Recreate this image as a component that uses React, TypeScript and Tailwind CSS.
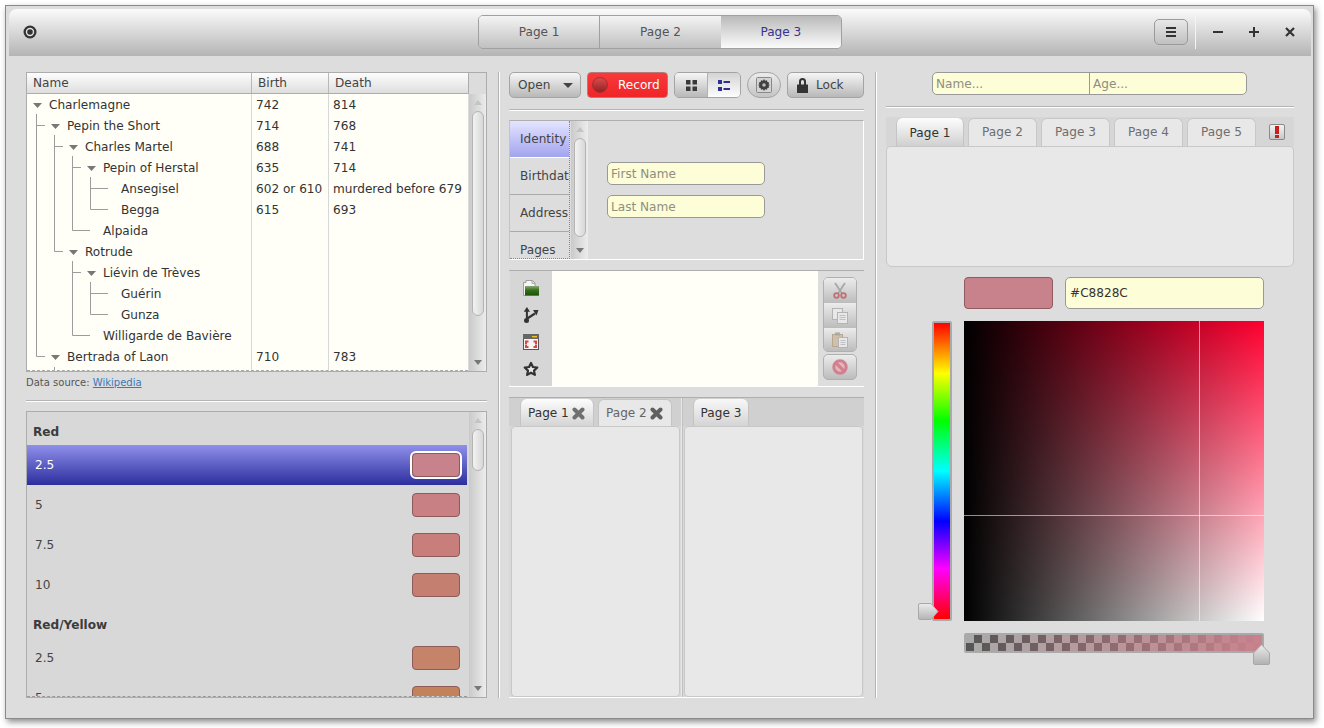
import React from "react";

const tri = (cls = "") => (
  <svg width="9" height="5" viewBox="0 0 9 5" className={cls}>
    <polygon points="0,0 9,0 4.5,5" fill="#777" />
  </svg>
);

function ScrollBar({ thumb, className = "" }: { thumb: string; className?: string }) {
  return (
    <div className={`w-[17px] shrink-0 flex flex-col items-center bg-[linear-gradient(to_right,#cacaca,#ececec)] ${className}`}>
      <div className="h-[17px] shrink-0 flex items-center justify-center">
        <svg width="8" height="5" viewBox="0 0 8 5"><polygon points="0,5 8,5 4,0" fill="#c4c4c4" /></svg>
      </div>
      <div className={`w-[12px] rounded-[6px] border border-[#b4b4b4] bg-[linear-gradient(to_right,#f2f2f2,#d8d8d8)] shrink-0 ${thumb}`} />
      <div className="flex-1 flex items-end justify-center pb-[6px]">
        <svg width="8" height="5" viewBox="0 0 8 5"><polygon points="0,0 8,0 4,5" fill="#777" /></svg>
      </div>
    </div>
  );
}

const treeRows: [string, number, boolean, string, string][] = [
  ["Charlemagne", 0, true, "742", "814"],
  ["Pepin the Short", 1, true, "714", "768"],
  ["Charles Martel", 2, true, "688", "741"],
  ["Pepin of Herstal", 3, true, "635", "714"],
  ["Ansegisel", 4, false, "602 or 610", "murdered before 679"],
  ["Begga", 4, false, "615", "693"],
  ["Alpaida", 3, false, "", ""],
  ["Rotrude", 2, true, "", ""],
  ["Liévin de Trèves", 3, true, "", ""],
  ["Guérin", 4, false, "", ""],
  ["Gunza", 4, false, "", ""],
  ["Willigarde de Bavière", 3, false, "", ""],
  ["Bertrada of Laon", 1, true, "710", "783"],
];

function TreeLines() {
  const d = [
    "M9.5 20V262.5H18", "M9.5 31.5H18",
    "M27.5 41V157.5H36", "M27.5 52.5H36",
    "M45.5 62V136.5H63", "M45.5 73.5H54",
    "M63.5 83V115.5H81", "M63.5 94.5H81",
    "M45.5 167V241.5H63", "M45.5 178.5H54",
    "M63.5 188V220.5H81", "M63.5 199.5H81",
    "M27.5 273V280",
  ].join(" ");
  return (
    <svg className="absolute left-0 top-0 pointer-events-none" width="120" height="280" viewBox="0 0 120 280">
      <path d={d} fill="none" stroke="#9c9c9c" strokeWidth="1" />
    </svg>
  );
}

function TreePanel() {
  return (
    <div className="h-[300px] border border-[#acacac] flex flex-col bg-[#dcdcdc] shrink-0">
      <div className="flex h-[21px] shrink-0">
        <div className="flex w-[442px] border-b border-r border-[#acacac] bg-[linear-gradient(to_bottom,#fdfdfd,#dedede)] text-[#444]">
          <div className="w-[225px] pl-[6px] border-r border-[#b8b8b8] leading-[20px]">Name</div>
          <div className="w-[77px] pl-[6px] border-r border-[#b8b8b8] leading-[20px]">Birth</div>
          <div className="flex-1 pl-[6px] leading-[20px]">Death</div>
        </div>
      </div>
      <div className="flex flex-1 min-h-0">
        <div className="w-[442px] relative overflow-hidden bg-[#fffff8] border-b border-dashed border-[#aaa] text-[#333] pt-[1px]">
          <TreeLines />
          <div className="absolute left-[224px] top-0 bottom-0 w-px bg-[#d8d8d8]" />
          <div className="absolute left-[301px] top-0 bottom-0 w-px bg-[#d8d8d8]" />
          {treeRows.map(([n, l, open, b, de]) => (
            <div key={n} className="flex h-[21px] items-center relative">
              <div className="w-[225px] flex items-center">
                <div className={l === 0 ? "w-[22px] shrink-0" : l === 1 ? "w-[40px] shrink-0" : l === 2 ? "w-[58px] shrink-0" : l === 3 ? "w-[76px] shrink-0" : "w-[94px] shrink-0"}>
                  {open && tri(l === 0 ? "ml-[6px]" : l === 1 ? "ml-[24px]" : l === 2 ? "ml-[42px]" : "ml-[60px]")}
                </div>
                <span className="whitespace-nowrap">{n}</span>
              </div>
              <div className="w-[77px] pl-[4px] whitespace-nowrap">{b}</div>
              <div className="flex-1 pl-[4px] whitespace-nowrap">{de}</div>
            </div>
          ))}
        </div>
        <ScrollBar thumb="h-[205px]" className="ml-[1px]" />
      </div>
    </div>
  );
}

function ListPanel() {
  const Sw = ({ c, sel }: { c: string; sel?: boolean }) => (
    <div className={`w-[48px] h-[24px] rounded-[4px] border border-[#8f5a5a] ${c} ${sel ? "outline-2 outline-white" : ""}`} />
  );
  const Row = ({ t, c, sel }: { t: string; c: string; sel?: boolean }) => (
    <div className={`h-[40px] shrink-0 flex items-center justify-between pl-[8px] pr-[7px] ${sel ? "bg-[linear-gradient(to_bottom,#8f90ea,#2c2e9e)] text-white" : "text-[#444]"}`}>
      <span>{t}</span>
      <Sw c={c} sel={sel} />
    </div>
  );
  const Head = ({ t }: { t: string }) => (
    <div className="h-[33px] shrink-0 flex items-center pl-[6px] font-bold text-[#3c3c3c] pt-[7px]">{t}</div>
  );
  return (
    <div className="flex-1 min-h-0 border border-[#acacac] flex bg-[#d8d8d8]">
      <div className="w-[441px] overflow-hidden flex flex-col border-b border-dashed border-[#999] h-[285px]">
        <Head t="Red" />
        <Row t="2.5" c="bg-[#c8828c]" sel />
        <Row t="5" c="bg-[#c88084]" />
        <Row t="7.5" c="bg-[#c87f7c]" />
        <Row t="10" c="bg-[#c47f70]" />
        <Head t="Red/Yellow" />
        <Row t="2.5" c="bg-[#c5836a]" />
        <Row t="5" c="bg-[#c3825a]" />
      </div>
      <div className="w-[2px]" />
      <ScrollBar thumb="h-[42px]" />
    </div>
  );
}

const btn = "h-[26px] rounded-[5px] border border-[#a4a4a4] bg-[linear-gradient(to_bottom,#f6f6f6,#b8b8b8)] flex items-center text-[#444]";

function Toolbar() {
  return (
    <div className="flex gap-[6px] h-[26px] shrink-0">
      <div className={`${btn} w-[72px] pl-[8px] justify-between pr-[7px]`}>
        <span>Open</span>
        <svg width="10" height="5" viewBox="0 0 10 5"><polygon points="0,0 10,0 5,5" fill="#444" /></svg>
      </div>
      <div className="h-[26px] w-[81px] rounded-[4px] border border-[#b87878] bg-[linear-gradient(to_bottom,#f83a3a,#f02428)] flex items-center pl-[4px] text-white">
        <div className="w-[16px] h-[16px] rounded-full bg-[linear-gradient(to_bottom,#d84c4c,#962020)] border border-[#a03030]" />
        <span className="ml-[10px]">Record</span>
      </div>
      <div className="flex h-[26px] w-[67px] rounded-[5px] border border-[#a4a4a4] overflow-hidden">
        <div className="w-[33px] bg-[linear-gradient(to_bottom,#f6f6f6,#b8b8b8)] flex items-center justify-center border-r border-[#b0b0b0]">
          <svg width="11" height="11" viewBox="0 0 11 11" fill="#3a3a3a"><rect width="4.5" height="4.5" /><rect x="6.5" width="4.5" height="4.5" /><rect y="6.5" width="4.5" height="4.5" /><rect x="6.5" y="6.5" width="4.5" height="4.5" /></svg>
        </div>
        <div className="flex-1 bg-[linear-gradient(to_bottom,#d4d4d4,#fdfdfd)] flex items-center justify-center">
          <svg width="12" height="11" viewBox="0 0 12 11" fill="#2d2f92"><rect width="4" height="4" /><rect x="5.5" y="1" width="6.5" height="2" /><rect y="7" width="4" height="4" /><rect x="5.5" y="8" width="6.5" height="2" /></svg>
        </div>
      </div>
      <div className="h-[26px] w-[34px] rounded-[13px] border border-[#a4a4a4] bg-[linear-gradient(to_bottom,#ececec,#c4c4c4)] flex items-center justify-center">
        <svg width="16" height="16" viewBox="0 0 16 16">
          <rect x="0.5" y="0.5" width="15" height="15" rx="1" fill="#d4d4d4" stroke="#888" />
          <path d="M8 2l1.1 1.8 1.9-.6.4 1.8 1.8.4-.6 1.9L14 8l-1.4.7.6 1.9-1.8.4-.4 1.8-1.9-.6L8 14l-1.1-1.8-1.9.6-.4-1.8-1.8-.4.6-1.9L2 8l1.4-.7-.6-1.9 1.8-.4.4-1.8 1.9.6z" fill="#404040" />
          <circle cx="8" cy="8" r="1.8" fill="#bdbdbd" />
        </svg>
      </div>
      <div className={`${btn} w-[77px] pl-[9px]`}>
        <svg width="11" height="15" viewBox="0 0 11 15"><path d="M3 7V3.5a2.5 2.5 0 0 1 5 0V7" fill="none" stroke="#333" strokeWidth="2" /><rect y="6.5" width="11" height="8.5" rx=".5" fill="#333" /></svg>
        <span className="ml-[8px]">Lock</span>
      </div>
    </div>
  );
}

const field = "rounded-[5px] border border-[#999] bg-[#fdfdd8]";

function SideTabs() {
  return (
    <div className="h-[140px] shrink-0 border-t border-[#aeaeae] border-b border-b-white border-l border-l-[#c4c4c4] border-r border-r-white flex">
      <div className="w-[60px] overflow-hidden flex flex-col text-[#444] border-r border-dotted border-[#888] border-b border-b-[#888] h-[138px]">
        <div className="h-[37px] shrink-0 pl-[10px] flex items-center bg-[linear-gradient(to_bottom,#e4e4ff,#a2a4ee)] border-b border-[#fff]">Identity</div>
        <div className="h-[37px] shrink-0 pl-[10px] flex items-center border-b border-[#aaa] whitespace-nowrap">Birthdate</div>
        <div className="h-[37px] shrink-0 pl-[10px] flex items-center border-b border-[#aaa]">Address</div>
        <div className="h-[37px] shrink-0 pl-[10px] flex items-center">Pages</div>
      </div>
      <div className="w-[1px]" />
      <ScrollBar thumb="h-[99px]" />
      <div className="flex flex-col gap-[10px] pl-[19px] pt-[41px]">
        <div className={`${field} w-[158px] h-[23px] pl-[3px] leading-[22px] text-[#8f8f80]`}>First Name</div>
        <div className={`${field} w-[158px] h-[23px] pl-[3px] leading-[22px] text-[#8f8f80]`}>Last Name</div>
      </div>
    </div>
  );
}

function Rail() {
  return (
    <div className="h-[117px] shrink-0 border-t border-[#aeaeae] border-b border-b-white flex">
      <div className="w-[42px] bg-[#d6d6d6] ml-[1px] flex flex-col items-center pt-[9px] gap-[11px] rounded-bl-[4px]">
        <svg width="16" height="16" viewBox="0 0 16 16">
          <defs><linearGradient id="fo" x1="0" y1="0" x2="0" y2="1"><stop offset="0" stopColor="#8aa878" /><stop offset=".45" stopColor="#356f18" /><stop offset="1" stopColor="#1d5206" /></linearGradient></defs>
          <path d="M.5 15.5V2.5H3V.5h6.5L12 3v3.5h3.5v9z" fill="#f6f6f6" stroke="#959595" strokeWidth=".9" />
          <path d="M9 .8V3.3H11.8" fill="none" stroke="#959595" strokeWidth=".9" />
          <rect x="2" y="6" width="14" height="9.5" fill="url(#fo)" />
        </svg>
        <svg width="16" height="16" viewBox="0 0 16 16" fill="#333">
          <circle cx="3.5" cy="13.5" r="2.5" />
          <rect x="2.9" y="3" width="2" height="10" />
          <polygon points="3.9,0 7,4.8 .8,4.8" />
          <path d="M3.5 12L12 6.5" stroke="#333" strokeWidth="2.2" />
          <polygon points="10,3 15.5,3 13.5,8.5" />
        </svg>
        <svg width="16" height="16" viewBox="0 0 16 16">
          <rect x=".5" y=".5" width="15" height="15" fill="#f8f4f4" stroke="#555" />
          <rect x="0" y="0" width="16" height="5" fill="#666" />
          <rect x="9" y="2" width="5" height="1.4" fill="#e8c030" />
          <path d="M2 6.5h3.5v2H4v1.5H2zM14 6.5h-3.5v2H12v1.5h2zM2 14h3.5v-2H4v-1.5H2zM14 14h-3.5v-2H12v-1.5h2z" fill="#d04848" />
        </svg>
        <svg width="16" height="16" viewBox="0 0 16 16"><polygon points="8,2 9.9,6 14.3,6.5 11,9.6 11.9,13.9 8,11.7 4.1,13.9 5,9.6 1.7,6.5 6.1,6" fill="#e8e8e8" stroke="#333" strokeWidth="2.2" strokeLinejoin="round" /></svg>
      </div>
      <div className="flex-1 bg-[#fffff8]" />
      <div className="w-[46px] flex flex-col items-center pt-[6px] pr-[2px]">
        <div className="w-[34px] rounded-[5px] border border-[#b0b0b0] overflow-hidden flex flex-col h-[75px]">
          <div className="h-[25px] bg-[linear-gradient(to_bottom,#ececec,#bcbcbc)] flex items-center justify-center">
            <svg width="14" height="17" viewBox="0 0 14 17"><path d="M2 1l7 10.5M12 1L5 11.5" stroke="#a8a8a8" strokeWidth="1.8" /><circle cx="3.5" cy="13.5" r="2.3" fill="none" stroke="#c07070" strokeWidth="1.8" /><circle cx="10.5" cy="13.5" r="2.3" fill="none" stroke="#c07070" strokeWidth="1.8" /></svg>
          </div>
          <div className="h-[25px] bg-[linear-gradient(to_bottom,#ececec,#bcbcbc)] flex items-center justify-center">
            <svg width="16" height="16" viewBox="0 0 16 16"><rect x=".5" y=".5" width="10" height="11" fill="#e8e8e8" stroke="#b4b4b4" /><rect x="5.5" y="4.5" width="10" height="11" fill="#e8e8e8" stroke="#b4b4b4" /><path d="M7.5 7.5h6M7.5 9.5h6M7.5 11.5h6" stroke="#c0c0c0" /></svg>
          </div>
          <div className="flex-1 bg-[linear-gradient(to_bottom,#ececec,#bcbcbc)] flex items-center justify-center">
            <svg width="16" height="16" viewBox="0 0 16 16"><rect x=".5" y="2.5" width="10" height="12" fill="#cfc0ac" stroke="#b8a890" /><rect x="3" y="0.5" width="5" height="3" fill="#aaa" /><rect x="6.5" y="5.5" width="9" height="10" fill="#e8e8e8" stroke="#b4b4b4" /><path d="M8.5 8.5h5M8.5 10.5h5M8.5 12.5h5" stroke="#c0c0c0" /></svg>
          </div>
        </div>
        <div className="w-[34px] h-[26px] mt-[2px] rounded-[5px] border border-[#b0b0b0] bg-[linear-gradient(to_bottom,#ececec,#bcbcbc)] flex items-center justify-center">
          <svg width="16" height="16" viewBox="0 0 16 16"><circle cx="8" cy="8" r="6.2" fill="#e8b4b8" stroke="#d08090" strokeWidth="3" /><path d="M3.6 3.6l8.8 8.8" stroke="#d08090" strokeWidth="3" /></svg>
        </div>
      </div>
    </div>
  );
}

const tabX = (c: string) => (
  <svg width="13" height="13" viewBox="0 0 13 13" className="ml-[3px]"><path d="M2.5 2.5l8 8M10.5 2.5l-8 8" stroke={c} strokeWidth="4" strokeLinecap="round" /></svg>
);

function SplitTabs() {
  return (
    <div className="flex-1 min-h-0 border-t border-[#aeaeae] border-b border-b-white flex">
      <div className="w-[172px] flex flex-col">
        <div className="h-[28px] bg-[#d0d0d0] flex items-end pl-[11px] gap-[4px] shrink-0">
          <div className="h-[27px] w-[74px] rounded-t-[6px] bg-[linear-gradient(to_bottom,#fdfdfd,#d4d4d4)] border-x border-[#c4c4c4] flex items-center pl-[7px] text-[#333] pt-[2px]">Page 1{tabX("#707070")}</div>
          <div className="h-[27px] w-[74px] rounded-t-[6px] bg-[#e8e8e8] border-x border-t border-[#c4c4c4] flex items-center pl-[7px] text-[#666] pt-[1px]">Page 2{tabX("#606060")}</div>
        </div>
        <div className="flex-1 bg-[#d8d8d8] pl-[2px] pr-[1px]">
          <div className="h-full rounded-[4px] bg-[#e8e8e8] border border-[#c8c8c8]" />
        </div>
      </div>
      <div className="w-[2px] bg-[#c0c0c0] border-l border-[#e8e8e8]" />
      <div className="flex-1 flex flex-col">
        <div className="h-[28px] bg-[#d0d0d0] flex items-end pl-[10px] shrink-0">
          <div className="h-[27px] w-[56px] rounded-t-[6px] bg-[linear-gradient(to_bottom,#f8f8f8,#d4d4d4)] border-x border-[#c4c4c4] flex items-center justify-center text-[#333] pt-[1px]">Page 3</div>
        </div>
        <div className="flex-1 bg-[#d8d8d8] px-[1px]">
          <div className="h-full rounded-[4px] bg-[#e8e8e8] border border-[#c8c8c8]" />
        </div>
      </div>
    </div>
  );
}

function ColorArea() {
  return (
    <div className="flex mt-[12px] flex-1 min-h-0">
      <div className="w-[78px] shrink-0 pl-[46px]">
        <div className="relative w-[20px] h-[300px]">
          <div className="h-full border-2 border-[#aaa] rounded-[2px] bg-[linear-gradient(to_bottom,#ff0000,#ffff00_17%,#00ff00_33%,#00ffff_50%,#0000ff_67%,#ff00ff_83%,#ff0000)]" />
          <svg className="absolute left-[-14px] top-[282px]" width="21" height="17" viewBox="0 0 21 17">
            <defs><linearGradient id="h" x1="0" y1="0" x2="0" y2="1"><stop offset="0" stopColor="#ececec" /><stop offset="1" stopColor="#b4b4b4" /></linearGradient></defs>
            <path d="M2 .5H13L20 8.5L13 16.5H2A1.5 1.5 0 0 1 .5 15V2A1.5 1.5 0 0 1 2 .5z" fill="url(#h)" stroke="#a8a8a8" />
          </svg>
        </div>
      </div>
      <div className="flex flex-col w-[300px]">
        <div className="h-[300px] relative bg-[linear-gradient(to_right,#000,transparent),linear-gradient(to_bottom,#ff0030,#ffffff)]">
          <div className="absolute left-[235px] top-0 bottom-0 w-px bg-white/55" />
          <div className="absolute top-[194px] left-0 right-0 h-px bg-white/55" />
        </div>
        <div className="relative mt-[12px] h-[20px] rounded-[2px] border-2 border-[#aaa] bg-[linear-gradient(to_right,rgba(200,130,140,0),#c8828c),conic-gradient(#555_25%,#aaa_0_50%,#555_0_75%,#aaa_0)] bg-[length:100%_100%,16px_16px]">
          <svg className="absolute left-[287px] top-[9px]" width="17" height="21" viewBox="0 0 17 21">
            <defs><linearGradient id="a" x1="0" y1="0" x2="0" y2="1"><stop offset="0" stopColor="#ececec" /><stop offset="1" stopColor="#b0b0b0" /></linearGradient></defs>
            <path d="M.5 19V9L8.5 .7L16.5 9V19A1.5 1.5 0 0 1 15 20.5H2A1.5 1.5 0 0 1 .5 19z" fill="url(#a)" stroke="#a8a8a8" />
          </svg>
        </div>
      </div>
    </div>
  );
}

function RightCol() {
  return (
    <div className="w-[408px] shrink-0 flex flex-col">
      <div className={`${field} ml-[46px] w-[315px] h-[23px] flex text-[#8f8f80] shrink-0`}>
        <div className="w-[157px] pl-[3px] leading-[22px] border-r border-[#999]">Name...</div>
        <div className="pl-[3px] leading-[22px]">Age...</div>
      </div>
      <div className="h-[2px] mt-[11px] mb-[9px] border-t border-[#b4b4b4] border-b border-b-white shrink-0" />
      <div className="h-[29px] bg-[#d6d6d6] flex items-end pl-[10px] gap-[4px] shrink-0">
        <div className="h-[28px] w-[68px] rounded-t-[6px] bg-[linear-gradient(to_bottom,#fdfdfd,#d0d0d0)] border-x border-[#c4c4c4] flex items-center justify-center text-[#333] pt-[2px]">Page 1</div>
        {["Page 2", "Page 3", "Page 4", "Page 5"].map((p) => (
          <div key={p} className="h-[28px] w-[69px] rounded-t-[6px] bg-[#e8e8e8] border-x border-t border-[#c8c8c8] flex items-center justify-center text-[#6e6e6e]">{p}</div>
        ))}
        <div className="self-center ml-[9px] w-[16px] h-[16px] rounded-[2px] border border-[#8a8a8a] bg-[linear-gradient(to_bottom,#f4f4f4,#c8c8c8)] flex flex-col items-center justify-center gap-[1px]">
          <div className="w-[4px] h-[8px] bg-[#c82018]" />
          <div className="w-[4px] h-[3px] bg-[#c82018]" />
        </div>
      </div>
      <div className="h-[121px] rounded-[6px] rounded-t-[4px] bg-[#e8e8e8] border border-[#c8c8c8] shrink-0" />
      <div className="flex mt-[10px] ml-[78px] gap-[12px] shrink-0">
        <div className="w-[89px] h-[32px] rounded-[4px] border border-[#8f5a60] bg-[#c8828c]" />
        <div className={`${field} w-[199px] h-[32px] pl-[4px] leading-[30px] text-[#333]`}>#C8828C</div>
      </div>
      <ColorArea />
    </div>
  );
}

const VSep = () => (
  <div className="w-[2px] ml-[11px] mr-[9px] shrink-0 border-l border-[#b4b4b4] border-r border-r-white h-[626px]" />
);

export default function App() {
  return (
    <div className="w-[1324px] h-[728px] bg-white pl-[5px] pt-[5px] overflow-hidden text-[12.1px] font-['DejaVu_Sans',sans-serif]">
      <div className="w-[1309px] h-[714px] border border-[#8a8a8a] bg-[#dddddd] p-[3px] pr-[2px] shadow-[2px_3px_6px_rgba(0,0,0,0.45)]">
        <div className="h-[47px] rounded-t-[8px] bg-[linear-gradient(to_bottom,#fbfbfb,#b4b4b4)] relative flex items-center pb-[1px]">
          <svg width="14" height="14" viewBox="0 0 14 14" className="ml-[14px]">
            <circle cx="7" cy="7" r="6.5" fill="#333" /><circle cx="7" cy="7" r="4.2" fill="#e4e4e4" /><circle cx="7" cy="7" r="2.8" fill="#333" />
          </svg>
          <div className="absolute left-[469px] top-[6px] w-[364px] h-[34px] flex rounded-[5px] border border-[#a0a0a0] overflow-hidden text-[#555]">
            <div className="flex-1 flex items-center justify-center border-r border-[#a0a0a0] bg-[linear-gradient(to_bottom,#f4f4f4,#c0c0c0)]">Page 1</div>
            <div className="flex-1 flex items-center justify-center bg-[linear-gradient(to_bottom,#f4f4f4,#c0c0c0)]">Page 2</div>
            <div className="flex-1 flex items-center justify-center bg-[linear-gradient(to_bottom,#bababa,#fbfbfb)] text-[#35358f]">Page 3</div>
          </div>
          <div className="ml-auto flex items-center pr-[16px] h-full">
            <div className="w-[34px] h-[26px] rounded-[5px] border border-[#9a9a9a] bg-[linear-gradient(to_bottom,#e8e8e8,#c0c0c0)] flex items-center justify-center">
              <svg width="10" height="10" viewBox="0 0 10 10" fill="#333"><rect width="10" height="2" /><rect y="4" width="10" height="2" /><rect y="8" width="10" height="2" /></svg>
            </div>
            <div className="w-[1px] h-[34px] bg-[#f4f4f4] ml-[7px] mr-[17px]" />
            <svg width="10" height="10" viewBox="0 0 10 10" className="mr-[26px]"><rect y="4" width="10" height="2" fill="#333" /></svg>
            <svg width="10" height="10" viewBox="0 0 10 10" className="mr-[26px]"><path d="M0 4h4V0h2v4h4v2H6v4H4V6H0z" fill="#333" /></svg>
            <svg width="10" height="10" viewBox="0 0 10 10"><path d="M1 1l8 8M9 1l-8 8" stroke="#333" strokeWidth="2.2" /></svg>
          </div>
        </div>
        <div className="flex pl-[17px] pt-[16px]">
          <div className="w-[461px] h-[626px] shrink-0 flex flex-col">
            <TreePanel />
            <div className="h-[20px] shrink-0 text-[10px] text-[#555] leading-[22px]">Data source: <span className="text-[#3a7ab8] underline">Wikipedia</span></div>
            <div className="h-[2px] mt-[8px] mb-[9px] border-t border-[#b4b4b4] border-b border-b-white shrink-0" />
            <ListPanel />
          </div>
          <VSep />
          <div className="w-[355px] h-[626px] shrink-0 flex flex-col">
            <Toolbar />
            <div className="h-[2px] mt-[11px] mb-[9px] border-t border-[#b4b4b4] border-b border-b-white shrink-0" />
            <SideTabs />
            <div className="h-[10px] shrink-0" />
            <Rail />
            <div className="h-[10px] shrink-0" />
            <SplitTabs />
          </div>
          <VSep />
          <RightCol />
        </div>
      </div>
    </div>
  );
}
